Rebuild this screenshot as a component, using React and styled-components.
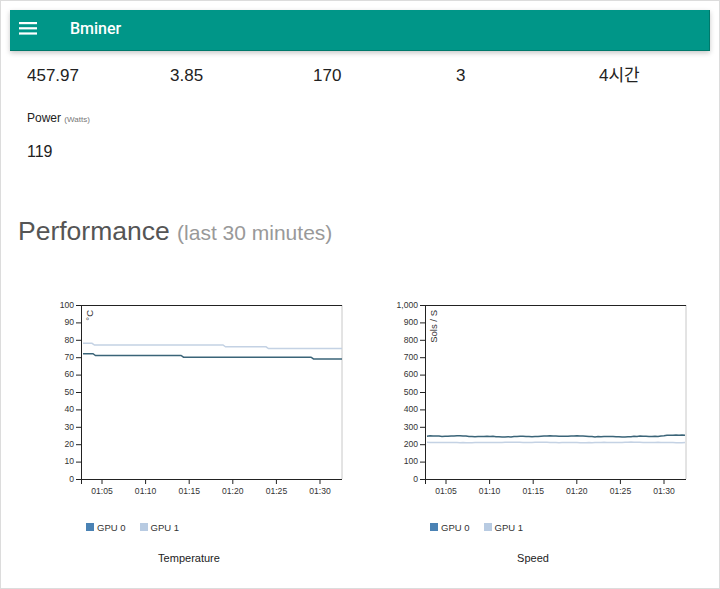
import React from "react";
import styled, { createGlobalStyle } from "styled-components";

const GlobalStyle = createGlobalStyle`
  html, body {
    margin: 0;
    padding: 0;
    background: #fff;
  }
  body {
    font-family: "Liberation Sans", Arial, "Noto Sans CJK KR", sans-serif;
    color: #222;
  }
`;

const Frame = styled.div`
  width: 720px;
  height: 589px;
  box-sizing: border-box;
  border: 1px solid #dcdcdc;
  overflow: hidden;
  background: #fff;
`;

const Header = styled.header`
  margin: 9px 9px 0 9px;
  height: 41px;
  box-sizing: border-box;
  background: #009688;
  border-bottom: 1px solid #00796b;
  border-right: 1px solid #00796b;
  box-shadow: 0 2px 5px rgba(0, 0, 0, 0.22);
  display: flex;
  align-items: center;
  padding-left: 9px;
  gap: 33px;
`;

const MenuButton = styled.div`
  display: flex;
  align-items: center;
  margin-top: -3px;
`;

const Brand = styled.h1`
  margin: 0;
  font-family: Roboto, "Liberation Sans", sans-serif;
  font-weight: 500;
  font-size: 16px;
  color: #fff;
  margin-top: -3px;
`;

const Content = styled.main`
  padding-left: 17px;
`;

const StatsRow = styled.div`
  display: grid;
  grid-template-columns: repeat(5, 143px);
  margin-top: 15px;
  padding-left: 9px;
`;

const StatValue = styled.div`
  font-size: 17px;
  line-height: 20px;
  color: #222;
  font-family: "Liberation Sans", Arial, "Noto Sans CJK KR", sans-serif;
`;

const PowerLabel = styled.div`
  margin-top: 25px;
  padding-left: 9px;
  font-size: 12px;
  line-height: 14px;
  color: #222;
`;

const Unit = styled.small`
  font-size: 8px;
  color: #777;
`;

const PowerValue = styled(StatValue)`
  margin-top: 15px;
  padding-left: 9px;
  font-size: 16px;
`;

const Heading = styled.h2`
  margin: 53px 0 0 0;
  font-weight: 400;
  font-size: 26.5px;
  line-height: 32px;
  color: #555;
`;

const HeadingNote = styled.span`
  font-size: 21px;
  color: #999;
`;

const ChartsRow = styled.div`
  display: flex;
  margin-top: 46px;
  margin-left: -1px;
`;

const ChartCol = styled.div`
  width: 344px;
  display: flex;
  flex-direction: column;
`;

const Legend = styled.div`
  display: flex;
  align-items: center;
  gap: 14px;
  margin-top: 26px;
  padding-left: 69px;
  height: 12px;
`;

const LegendItem = styled.div`
  display: flex;
  align-items: center;
  gap: 3px;
  font-size: 9.5px;
  color: #333;
`;

const Swatch = styled.span`
  width: 8px;
  height: 8px;
  background: ${(p) => p.$color};
`;

const ChartTitle = styled.div`
  margin-top: 18px;
  text-align: center;
  font-size: 11px;
  line-height: 14px;
  color: #222;
`;

const AxisText = styled.text`
  font-family: "Liberation Sans", Arial, sans-serif;
  font-size: ${(p) => p.$size || 8.6}px;
  fill: #333;
`;

const W = 261;
const H = 174;
const ML = 64;
const MT = 10;
const TICKS_X = ["01:05", "01:10", "01:15", "01:20", "01:25", "01:30"];

function buildPath(points, yMax) {
  return points
    .map(([x, v], i) => `${i ? "L" : "M"}${x.toFixed(1)},${(H - (v / yMax) * H).toFixed(1)}`)
    .join(" ");
}

function steps(segments) {
  // segments: [[xEnd, value], ...] starting from x=2
  const pts = [];
  let x0 = 2;
  segments.forEach(([xEnd, v], i) => {
    pts.push([i === 0 ? x0 : x0 + 2.5, v]);
    pts.push([xEnd, v]);
    x0 = xEnd;
  });
  return pts;
}

const tempSeries = [
  { color: "#3a6478", points: steps([[12, 72], [100, 71], [230, 70], [261, 69]]) },
  { color: "#c4d2e4", points: steps([[11, 78], [142, 77], [185, 76], [261, 75]]) },
];

function noisy(base, amp, seed, rise) {
  const pts = [];
  for (let x = 2; x <= 261; x += 3) {
    const t = x + seed;
    let v = base + amp * (Math.sin(t * 0.21) * 0.6 + Math.sin(t * 0.057) * 0.8 + Math.sin(t * 0.9) * 0.3);
    if (rise && x > 235) v += ((x - 235) / 26) * rise;
    pts.push([x, v]);
  }
  return pts;
}

const speedSeries = [
  { color: "#3a6478", points: noisy(245, 2.6, 3, 8) },
  { color: "#c4d2e4", points: noisy(210, 1.2, 40, 0) },
];

const Chart = ({ yMax, yStep, format, unit, series }) => {
  const yTicks = [];
  for (let v = 0; v <= yMax; v += yStep) yTicks.push(v);
  return (
    <svg width="344" height="200">
      <g transform={`translate(${ML},${MT})`}>
        <line x1={W} y1={0} x2={W} y2={H} stroke="#c8c8c8" strokeWidth="1" />
        <line x1={0} y1={0.5} x2={W} y2={0.5} stroke="#222" strokeWidth="1" />
        {series.map((s, i) => (
          <path key={i} d={buildPath(s.points, yMax)} fill="none" stroke={s.color} strokeWidth="1.5" />
        ))}
        <line x1={0.5} y1={0} x2={0.5} y2={H} stroke="#222" strokeWidth="1" />
        {yTicks.map((v) => {
          const y = H - (v / yMax) * H;
          return (
            <g key={v} transform={`translate(0,${y})`}>
              <line x1={-5} x2={0} y1={0.5} y2={0.5} stroke="#222" />
              <AxisText x={-7} dy="0.32em" textAnchor="end">
                {format(v)}
              </AxisText>
            </g>
          );
        })}
        <line x1={0} y1={H + 0.5} x2={W} y2={H + 0.5} stroke="#222" strokeWidth="1" />
        <line x1={0.5} y1={H} x2={0.5} y2={H + 5} stroke="#222" />
        {TICKS_X.map((t, i) => {
          const x = 21 + i * 43.6;
          return (
            <g key={t} transform={`translate(${x},${H})`}>
              <line x1={0} x2={0} y1={0} y2={5} stroke="#222" />
              <AxisText y={15} textAnchor="middle">
                {t}
              </AxisText>
            </g>
          );
        })}
        <AxisText $size={9.5} transform="rotate(-90)" x={-5} y={5} dy="0.71em" textAnchor="end">
          {unit}
        </AxisText>
      </g>
    </svg>
  );
};

const MenuIcon = () => (
  <svg width="18" height="13" viewBox="0 0 18 13">
    <rect x="0" y="0" width="18" height="2.2" fill="#fff" />
    <rect x="0" y="5.2" width="18" height="2.2" fill="#fff" />
    <rect x="0" y="10.4" width="18" height="2.2" fill="#fff" />
  </svg>
);

const ChartBlock = ({ title, children }) => (
  <ChartCol>
    {children}
    <Legend>
      <LegendItem>
        <Swatch $color="#4a82b4" />
        GPU 0
      </LegendItem>
      <LegendItem>
        <Swatch $color="#b8cbe2" />
        GPU 1
      </LegendItem>
    </Legend>
    <ChartTitle>{title}</ChartTitle>
  </ChartCol>
);

const stats = ["457.97", "3.85", "170", "3", "4시간"];

export default function App() {
  return (
    <Frame>
      <GlobalStyle />
      <Header>
        <MenuButton>
          <MenuIcon />
        </MenuButton>
        <Brand>Bminer</Brand>
      </Header>
      <Content>
        <StatsRow>
          {stats.map((s) => (
            <StatValue key={s}>{s}</StatValue>
          ))}
        </StatsRow>
        <PowerLabel>
          Power <Unit>(Watts)</Unit>
        </PowerLabel>
        <PowerValue>119</PowerValue>
        <Heading>
          Performance <HeadingNote>(last 30 minutes)</HeadingNote>
        </Heading>
        <ChartsRow>
          <ChartBlock title="Temperature">
            <Chart yMax={100} yStep={10} format={(v) => String(v)} unit="°C" series={tempSeries} />
          </ChartBlock>
          <ChartBlock title="Speed">
            <Chart
              yMax={1000}
              yStep={100}
              format={(v) => v.toLocaleString("en-US")}
              unit="Sols / S"
              series={speedSeries}
            />
          </ChartBlock>
        </ChartsRow>
      </Content>
    </Frame>
  );
}
